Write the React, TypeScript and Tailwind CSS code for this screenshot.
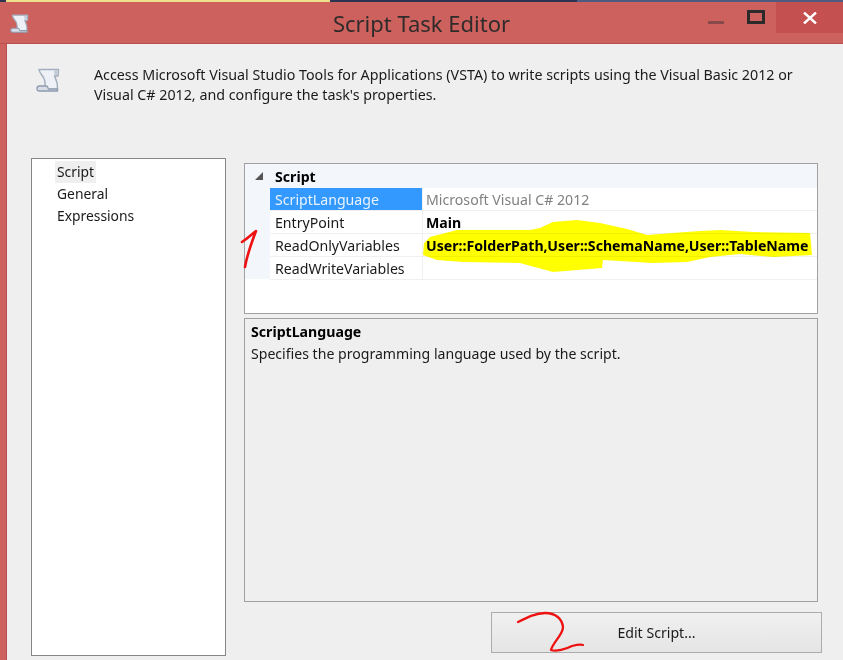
import React from 'react';

const navItems = ['Script', 'General', 'Expressions'];

const gridRows = [
    {name: 'ScriptLanguage', value: 'Microsoft Visual C# 2012', selected: true},
    {name: 'EntryPoint', value: 'Main', bold: true},
    {name: 'ReadOnlyVariables', value: 'User::FolderPath,User::SchemaName,User::TableName', bold: true},
    {name: 'ReadWriteVariables', value: ''},
];

// Scroll glyph used for the title bar and the header
const ScrollIcon = ({className}: { className: string }) => (
    <svg viewBox="0 0 24 24" className={className}>
        <path d="M3 1.5H22.5L22 8H18.5C19.5 11 22 13 21.5 21.5H8.5C9.5 17 9.5 13 7.5 9.5C6 7 3.5 5 3 1.5z"
              fill="#eef1f6" stroke="#a3aebf" strokeWidth="1.5" strokeLinejoin="round"/>
        <path d="M18 2.5L21.5 2.5L21 7H18.5z" fill="#c3cad6"/>
        <path d="M1 20.5C1 19 2 18 3.5 18H10.5C11.5 18 12 19.5 12.5 21H21.5V23H3C1.8 23 1 22 1 20.5z"
              fill="#d7dce6" stroke="#8f9bae" strokeWidth="1.3" strokeLinejoin="round"/>
    </svg>
);

const PropertyRow = ({name, value, selected, bold}: { name: string; value: string; selected?: boolean; bold?: boolean }) => (
    <div className="flex h-[23px] border-b border-[#f0f0f0]">
        <div className={`w-[152px] pl-[5px] shrink-0 leading-[23px] ${selected ? 'bg-[#3399ff] text-[#e8f3ff]' : 'text-[#1a1a1a]'}`}>
            {name}
        </div>
        <div
            className={`flex-1 pl-[3px] leading-[23px] border-l border-[#f0f0f0] ${bold ? 'font-bold text-black' : 'text-[#808080]'}`}>
            {value}
        </div>
    </div>
);

export default function App() {
    return (
        <div className="relative w-[843px] h-[660px] overflow-hidden bg-[#cd615d] text-[14.15px] font-['Noto_Sans','Open_Sans',sans-serif]">
            {/* Sliver of the desktop above the window */}
            <div className="flex h-[2px]">
                <div className="w-[6px] bg-[#2c3350]"/>
                <div className="w-[324px] bg-[#f0e08c]"/>
                <div className="w-[247px] bg-[#2c3350]"/>
                <div className="flex-1 bg-[#4f5a80]"/>
            </div>

            {/* Title bar */}
            <div className="relative flex h-[42px] items-center justify-center border-b border-[#b84f4d]">
                <ScrollIcon className="absolute left-[10px] top-[12px] w-[19px] h-[19px]"/>
                <span className="text-[22px] text-[#2f2b2b] pt-[2px]">Script Task Editor</span>
                <div className="absolute left-[708px] top-[19px] w-4 h-[3px] bg-[#8a4a4a]"/>
                <div className="absolute left-[747px] top-[8px] w-[18px] h-[14px] border-[3px] border-[#2b2b2b]"/>
                <div className="absolute right-0 top-0 flex h-[31px] w-[67px] items-center justify-center bg-[#c55050]">
                    <svg viewBox="0 0 14 12" className="w-[14px] h-[12px]">
                        <path d="M1 0.5 13 11.5M13 0.5 1 11.5" stroke="#fff" strokeWidth="2.4"/>
                    </svg>
                </div>
            </div>

            {/* Window body */}
            <div className="ml-[6px] h-[616px] border-l border-[#b84f4d] bg-[#efefef] flex flex-col">
                <div className="flex h-[114px] shrink-0">
                    <ScrollIcon className="ml-[29px] mt-[24px] w-[24px] h-[24px] shrink-0"/>
                    <p className="ml-[34px] mt-[21px] text-[14.28px] leading-[20px] text-[#1a1a1a] whitespace-nowrap">
                        Access Microsoft Visual Studio Tools for Applications (VSTA) to write scripts using the Visual Basic 2012 or<br/>
                        Visual C# 2012, and configure the task's properties.
                    </p>
                </div>

                <div className="flex flex-1 pl-[24px] pb-[4px]">
                    {/* Page list */}
                    <div className="w-[195px] h-[498px] shrink-0 border border-[#85858a] bg-white pl-[23px] pt-[2px] text-[13.85px] leading-[22px] text-[#1a1a1a]">
                        {navItems.map((item, i) => (
                            <div key={item} className="h-[22px]">
                                <span className={`inline-block px-[2px] ${i === 0 ? 'bg-[#efefef]' : ''}`}>{item}</span>
                            </div>
                        ))}
                    </div>

                    <div className="ml-[18px] w-[578px] flex flex-col">
                        {/* Property grid */}
                        <div className="mt-[5px] w-[574px] h-[151px] border border-[#a0a0a0] bg-white">
                            <div className="flex h-[24px] bg-[#f3f6fb]">
                                <div className="w-[25px] shrink-0 flex justify-center pt-[8px]">
                                    <svg viewBox="0 0 8 8" className="w-2 h-2 ml-[3px]">
                                        <path d="M8 0V8H0z" fill="#555"/>
                                    </svg>
                                </div>
                                <span className="font-bold text-black leading-[26px] pl-[5px]">Script</span>
                            </div>
                            <div className="flex">
                                <div className="w-[25px] h-[91px] shrink-0 bg-[#f3f6fb]"/>
                                <div className="flex-1 min-w-0">
                                    {gridRows.map((row) => (
                                        <PropertyRow key={row.name} {...row}/>
                                    ))}
                                </div>
                            </div>
                        </div>

                        {/* Description pane */}
                        <div className="mt-[4px] w-[574px] h-[284px] border border-[#a0a0a0] px-[6px] pt-[3px] leading-[20px] text-[#1a1a1a]">
                            <div className="font-bold text-black">ScriptLanguage</div>
                            <div className="mt-[2px] text-[14.1px]">Specifies the programming language used by the script.</div>
                        </div>

                        <div className="mt-[10px] self-end flex h-[41px] w-[331px] items-center justify-center border border-[#acacac] bg-gradient-to-b from-[#f0f0f0] to-[#e5e5e5] text-[#1a1a1a]">
                            <span>Edit Script...</span>
                        </div>
                    </div>
                </div>
            </div>

            {/* Marker annotations drawn over the screenshot */}
            <svg viewBox="0 0 843 660" className="absolute inset-0 w-[843px] h-[660px] pointer-events-none">
                <path
                    d="M423 255L424 243L430 237L457 230L530 230L540 228L553 222L577 220L600 223L627 229L647 235L673 233L700 231L720 230L753 232L810 233L812 255L773 257L740 254L710 257L687 262L653 263L603 260L602 268L553 272L520 263L463 262L437 260Z"
                    fill="#ffff00" className="mix-blend-multiply"/>
                <path d="M242 242C248 238 252 234 256 231C251 244 247 255 245 267" fill="none" stroke="#ee1111"
                      strokeWidth="2.6" strokeLinecap="round" strokeLinejoin="round"/>
                <path d="M518 622C528 617 536 613 545 613C556 613 562 619 563 627C563 635 553 642 551 650C556 652 566 649 572 646C576 645 580 644 583 645"
                      fill="none" stroke="#ee1111" strokeWidth="2.3" strokeLinecap="round" strokeLinejoin="round"/>
            </svg>
        </div>
    );
}
